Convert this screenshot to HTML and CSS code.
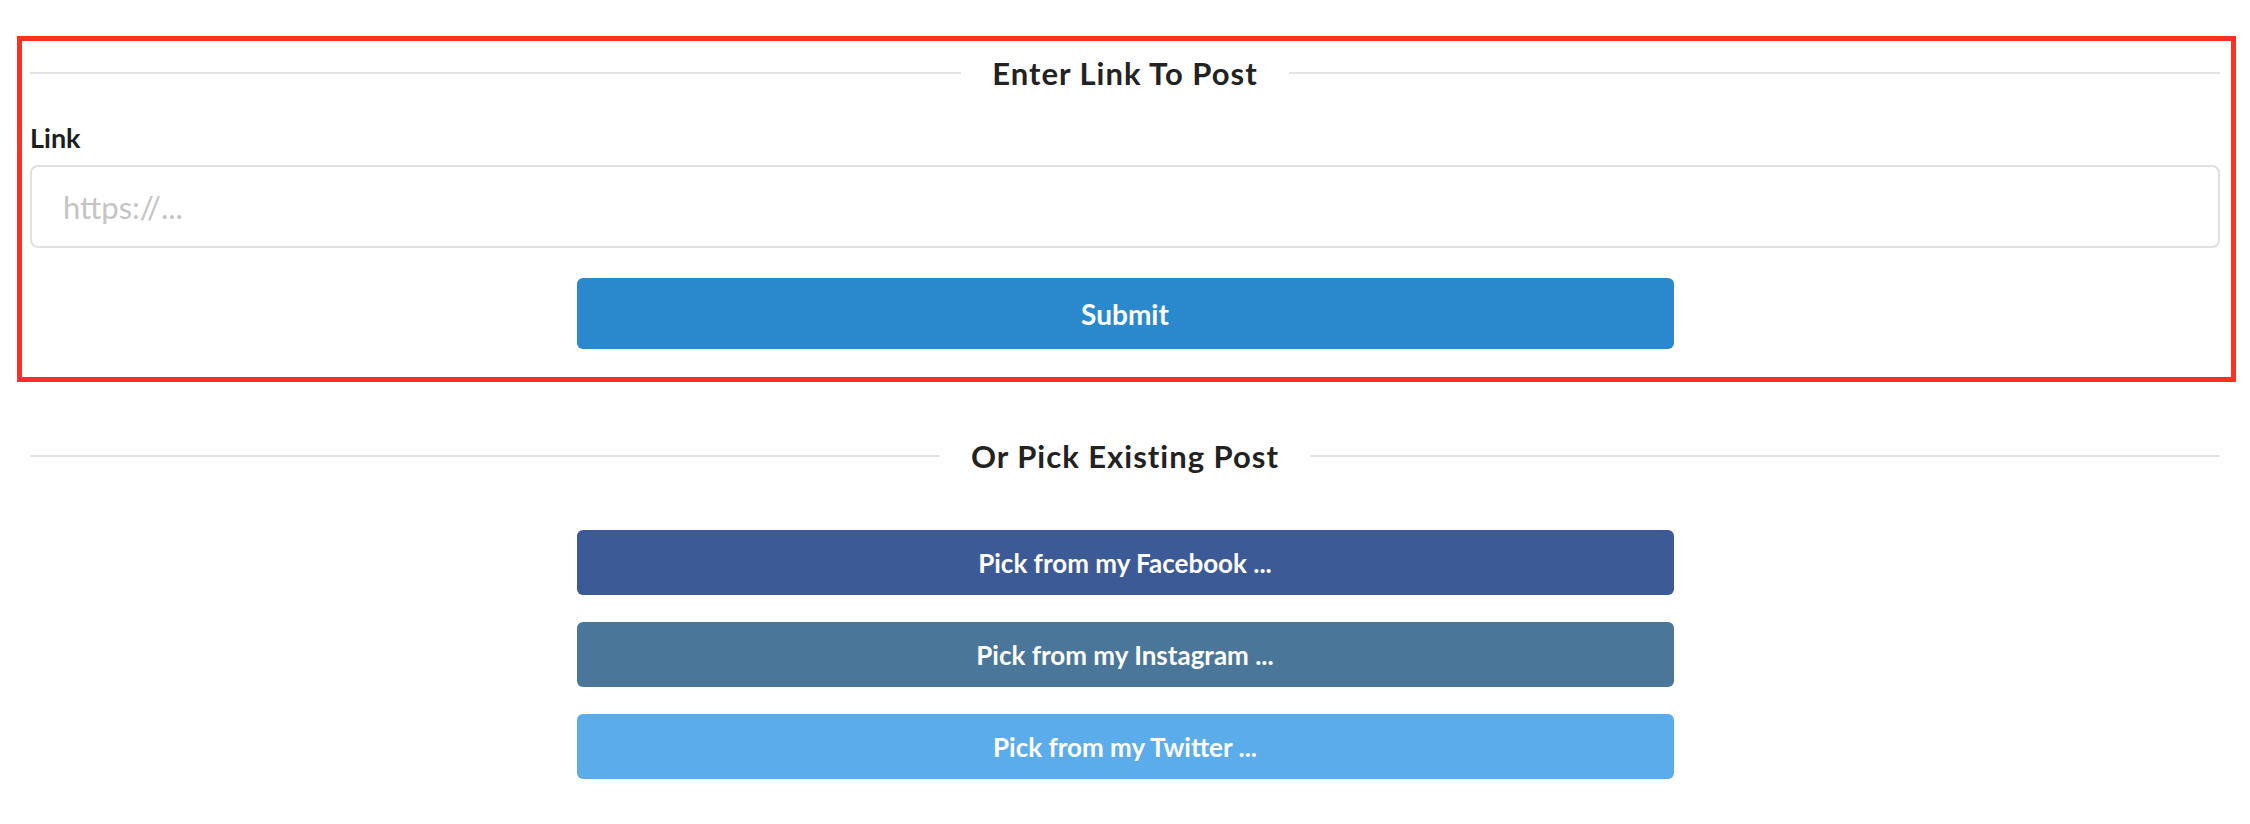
FILE: index.html
```html
<!DOCTYPE html>
<html>
<head>
<meta charset="utf-8">
<link rel="stylesheet" href="styles.css">
</head>
<body>
<div class="page">
  <section class="panel">
    <div class="divider"><span class="divider-line"></span><h2 class="divider-title">Enter Link To Post</h2><span class="divider-line"></span></div>
    <label class="field-label" for="link">Link</label>
    <input class="field-input" id="link" type="text" placeholder="https://...">
    <div class="btn-row"><button class="btn btn-submit">Submit</button></div>
  </section>
  <section class="picker">
    <div class="divider"><span class="divider-line"></span><h2 class="divider-title">Or Pick Existing Post</h2><span class="divider-line"></span></div>
    <div class="btn-stack">
      <button class="btn btn-facebook">Pick from my Facebook ...</button>
      <button class="btn btn-instagram">Pick from my Instagram ...</button>
      <button class="btn btn-twitter">Pick from my Twitter ...</button>
    </div>
  </section>
</div>
</body>
</html>
```
FILE: styles.css
```css
* { box-sizing: border-box; }
html, body { margin: 0; padding: 0; background: #fff; }
body { font-family: Lato, "Open Sans", "Liberation Sans", sans-serif; color: #222; }
.page { width: 2250px; }
.panel {
  margin: 36px 14px 0 17px;
  border: 5px solid #ff2f22;
  padding: 0 11px 28px 8px;
}
.divider { display: flex; align-items: center; height: 64px; }
.divider-line { flex: 1; height: 2px; background: #e4e4e4; }
.divider-title {
  margin: 0; padding: 0 31px;
  font-size: 31px; font-weight: 700; letter-spacing: 1px;
  color: #222; line-height: 64px;
}
.field-label {
  display: block; margin-top: 17px; margin-bottom: 11px;
  font-size: 27px; font-weight: 700; line-height: 32px; color: #1e1e1e;
}
.field-input {
  display: block; width: 100%; height: 83px;
  border: 2px solid #e0e0e0; border-radius: 8px;
  padding: 0 31px; font-family: Lato, sans-serif; font-size: 31px; color: #333;
  outline: none;
}
.field-input::placeholder { color: #c4c4c4; }
.btn-row { display: flex; justify-content: center; margin-top: 30px; }
.btn {
  display: block; width: 1097px; border: none; border-radius: 6px;
  font-family: Lato, sans-serif; font-weight: 700; color: #fff;
  font-size: 26px; cursor: pointer;
}
.btn-submit { height: 71px; background: #2a88cd; font-size: 28px; }
.picker { margin: 42px 30px 0 30px; }
.btn-stack { display: flex; flex-direction: column; align-items: center; gap: 27px; margin-top: 42px; }
.btn-stack .btn { height: 65px; }
.btn-facebook { background: #3c5a96; }
.btn-instagram { background: #4a7799; }
.btn-twitter { background: #5aacea; }
```
